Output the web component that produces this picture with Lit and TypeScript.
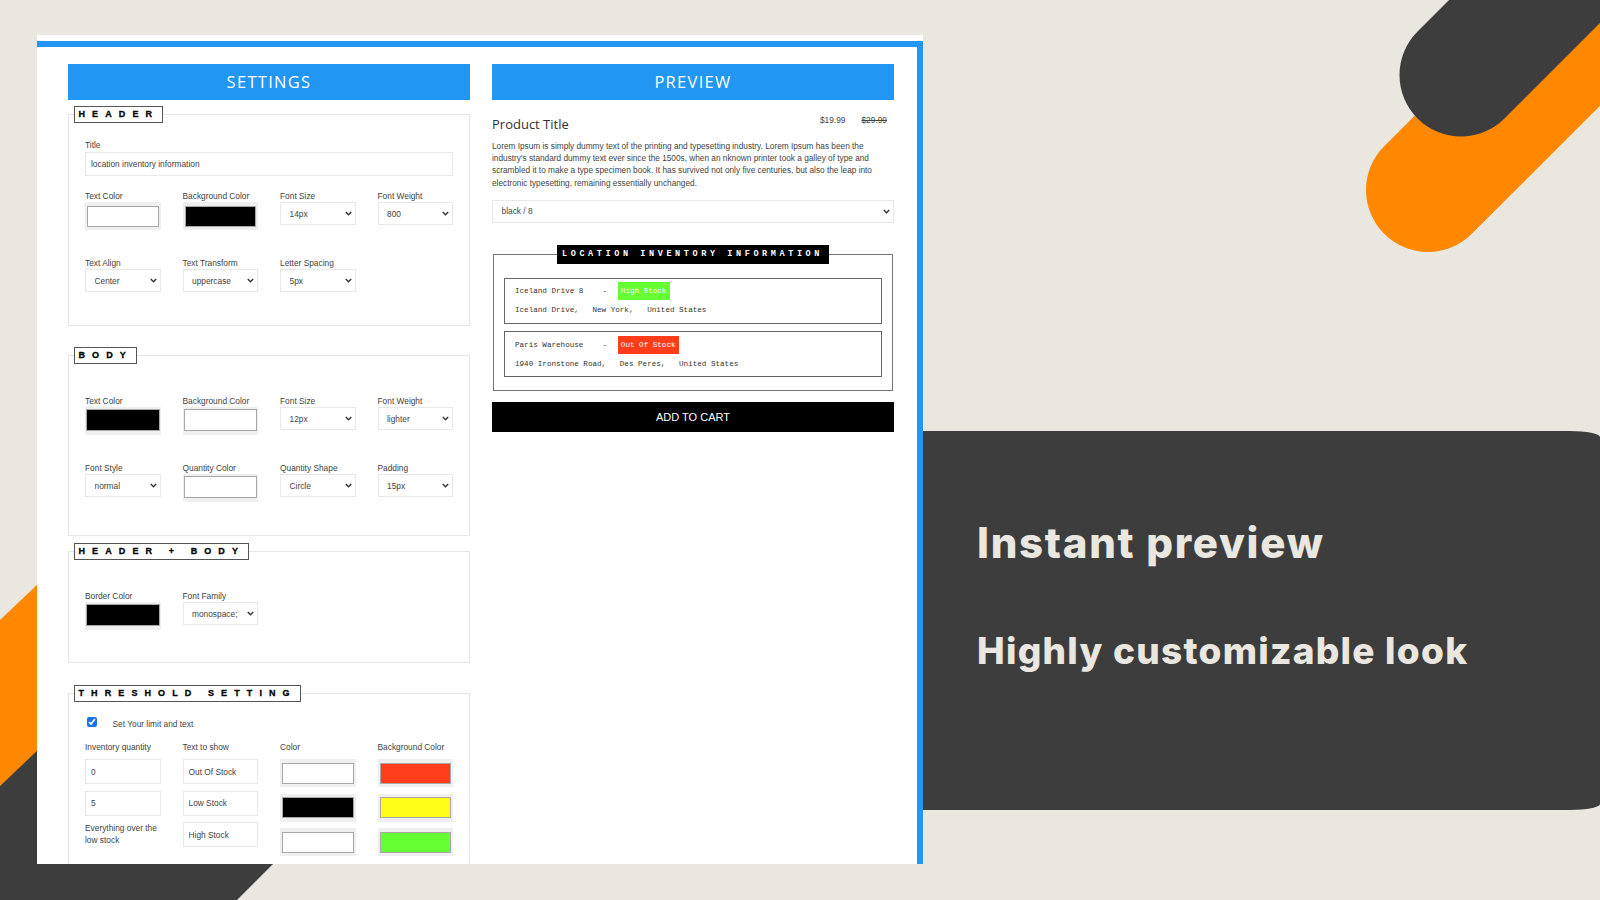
import { LitElement, html, css, svg } from "lit";
import { customElement } from "lit/decorators.js";

type Ctl =
  | { k: "color"; label: string; c: string; tight?: boolean }
  | { k: "select"; label: string; v: string };

const sel = (label: string, v: string): Ctl => ({ k: "select", label, v });
const col = (label: string, c: string, tight = false): Ctl => ({ k: "color", label, c, tight });

const headerRows: Ctl[] = [
  col("Text Color", "#fff"),
  col("Background Color", "#000"),
  sel("Font Size", "14px"),
  sel("Font Weight", "800"),
  sel("Text Align", "Center"),
  sel("Text Transform", "uppercase"),
  sel("Letter Spacing", "5px"),
];
const bodyRows: Ctl[] = [
  col("Text Color", "#000", true),
  col("Background Color", "#fff", true),
  sel("Font Size", "12px"),
  sel("Font Weight", "lighter"),
  sel("Font Style", "normal"),
  col("Quantity Color", "#fff", true),
  sel("Quantity Shape", "Circle"),
  sel("Padding", "15px"),
];
const bothRows: Ctl[] = [col("Border Color", "#000", true), sel("Font Family", "monospace;")];

@customElement("app-root")
export class AppRoot extends LitElement {
  static styles = css`
    :host {
      display: block;
      position: relative;
      width: 1600px;
      height: 900px;
      overflow: hidden;
      background: #e9e7e0;
      font-family: "Liberation Sans", Arial, sans-serif;
      color: #444;
    }
    .bg { position: absolute; inset: 0; width: 1600px; height: 900px; }
    .page {
      position: relative;
      display: flex;
      align-items: flex-start;
      padding: 35px 0 0 37px;
    }
    .window {
      width: 886px;
      height: 829px;
      box-sizing: border-box;
      background: #fff;
      padding-top: 6px;
      overflow: hidden;
      flex: none;
    }
    .frame {
      height: 823px;
      box-sizing: border-box;
      border-top: 6px solid #2196f3;
      border-right: 6px solid #2196f3;
      padding: 16px 23px 0 31px;
      display: grid;
      grid-template-columns: 402px 402px;
      column-gap: 22px;
      align-items: start;
    }
    .title {
      height: 36px;
      margin-top: 0.5px;
      background: #2196f3;
      color: #fff;
      display: flex;
      align-items: center;
      justify-content: center;
      font: 400 16.5px "Open Sans", sans-serif;
      letter-spacing: 1.3px;
    }
    fieldset {
      margin: 0;
      padding: 0 16px 0 16px;
      border: 1.5px solid #e6e6e6;
      box-sizing: border-box;
      min-inline-size: 0;
    }
    legend {
      margin-left: -11px;
      padding: 0 3px 0 3.5px;
      height: 17px;
      box-sizing: border-box;
      border: 1.5px solid #555;
      background: #fff;
      color: #000;
      font: 700 9px/14px "Liberation Sans", sans-serif;
      -webkit-text-stroke: 0.3px #000;
      letter-spacing: 7.1px;
      white-space: pre;
    }
    .f1 { height: 220px; margin-top: 6.5px; padding-top: 17px; }
    .f2 { height: 189px; margin-top: 21px; padding-top: 31px; }
    .f3 { height: 120px; margin-top: 7px; padding-top: 30px; }
    .f4 { height: 240px; margin-top: 22px; padding-top: 16px; }
    .lab {
      display: block;
      font-size: 8.35px;
      line-height: 11px;
      height: 11px;
      margin-bottom: 1px;
      white-space: nowrap;
    }
    .grid .lab { margin: 1px 0 0; }
    .text {
      display: block;
      box-sizing: border-box;
      width: 100%;
      height: 25px;
      border: 1px solid #e8e8e8;
      padding: 0 5px;
      background: #fff;
      color: #444;
      font: 8.35px "Liberation Sans", sans-serif;
      outline: none;
    }
    .title-input { height: 24px; }
    .grid {
      display: grid;
      grid-template-columns: repeat(4, 75.5px);
      column-gap: 22px;
      grid-auto-rows: 67px;
    }
    .mt { margin-top: 14px; }
    .control {
      appearance: none;
      -webkit-appearance: none;
      display: block;
      box-sizing: border-box;
      width: 100%;
      height: 23px;
      padding: 0 12px 0 8.5px;
      border: 1px solid #e8e8e8;
      border-radius: 0;
      color: #444;
      font: 8.35px "Liberation Sans", sans-serif;
      outline: none;
      background: #fff url("data:image/svg+xml,%3Csvg xmlns='http://www.w3.org/2000/svg' width='7' height='5' viewBox='0 0 7 5'%3E%3Cpath d='M.8 1l2.7 2.7L6.2 1' fill='none' stroke='%23333' stroke-width='1.4'/%3E%3C/svg%3E") no-repeat right 3px center;
    }
    .swatch {
      box-sizing: border-box;
      width: 100%;
      height: 28px;
      background: #efefef;
      padding: 3.5px 2px 3.5px;
    }
    .swatch.tight { padding: 1.5px 1px 4px; }
    .swatch i {
      display: block;
      height: 100%;
      box-sizing: border-box;
      border: 1px solid #a8a8a8;
    }
    .check {
      display: flex;
      align-items: center;
      height: 12px;
      margin-bottom: 12px;
      padding-left: 2px;
      font-size: 8.35px;
    }
    .check input {
      width: 10px;
      height: 10px;
      margin: 0 15.5px 4px 0;
      accent-color: #1a73e8;
    }
    .cols {
      display: grid;
      grid-template-columns: repeat(4, 75.5px);
      column-gap: 22px;
      align-items: start;
    }
    .cols .lab { margin-bottom: 6px; }
    .stack-i { display: flex; flex-direction: column; gap: 6.6px; }
    .stack-s { display: flex; flex-direction: column; gap: 6.6px; }
    .over { font-size: 8.35px; line-height: 12px; }
    /* preview */
    .head {
      display: flex;
      align-items: flex-start;
      justify-content: space-between;
      margin-top: 14.5px;
      height: 27px;
    }
    .ptitle { font: 400 13px/20px "Open Sans", sans-serif; color: #333; }
    .prices {
      display: flex;
      gap: 16px;
      padding: 0.5px 7px 0 0;
      font-size: 8.35px;
      line-height: 11px;
    }
    .desc {
      margin: 0;
      font-size: 8.28px;
      line-height: 12.2px;
      white-space: nowrap;
      color: #444;
    }
    .variant { margin-top: 10px; width: 402px; }
    .widget {
      position: relative;
      margin: 31px 1px 0;
      height: 137px;
      box-sizing: border-box;
      border: 1.5px solid #777;
      padding: 23px 10px 0;
      display: flex;
      flex-direction: column;
      gap: 7px;
      font-family: "Liberation Mono", "DejaVu Sans Mono", monospace;
    }
    .wtitle {
      position: absolute;
      top: -9.5px;
      left: 62.5px;
      width: 272px;
      height: 19px;
      background: #000;
      color: #fff;
      font: 700 8.5px/19px "Liberation Mono", monospace;
      letter-spacing: 3.6px;
      text-align: center;
      white-space: pre;
    }
    .loc {
      box-sizing: border-box;
      height: 46px;
      border: 1.5px solid #666;
      padding: 3px 9.5px 0 10px;
      font-size: 7.6px;
      color: #333;
    }
    .loc + .loc { padding-top: 4px; }
    .loc .l1 { display: flex; align-items: center; height: 18px; }
    .loc .l2 { line-height: 20px; white-space: pre; }
    .badge {
      color: #fff;
      height: 18px;
      line-height: 18px;
      padding: 0 3.3px;
      margin-left: 10.5px;
    }
    .name { width: 87.5px; }
    .cart {
      margin-top: 11.5px;
      height: 30px;
      background: #000;
      color: #fff;
      display: flex;
      align-items: center;
      justify-content: center;
      font-size: 11px;
    }
    .panel {
      flex: none;
      width: 677px;
      height: 379px;
      margin-top: 396px;
      box-sizing: border-box;
      background: #3d3d3d;
      border-radius: 0 30px 30px 0 / 0 6px 6px 0;
      padding: 87px 0 0 54px;
      color: #e9e7e0;
      font-family: Inter, sans-serif;
      font-weight: 800;
    }
    .h1 { font-size: 42px; line-height: 50px; letter-spacing: 1.7px; white-space: nowrap; }
    .h2 { font-size: 37px; line-height: 44px; margin-top: 61px; letter-spacing: 1.25px; white-space: nowrap; }
  `;

  private ctl(c: Ctl) {
    if (c.k === "select")
      return html`<div>
        <span class="lab">${c.label}</span>
        <select class="control"><option>${c.v}</option></select>
      </div>`;
    return html`<div>
      <span class="lab">${c.label}</span>
      ${this.swatch(c.c, c.tight)}
    </div>`;
  }

  private swatch(c: string, tight = false) {
    return html`<div class="swatch ${tight ? "tight" : ""}"><i style="background:${c}"></i></div>`;
  }

  render() {
    return html`
      <svg class="bg" viewBox="0 0 1600 900" aria-hidden="true">
        ${svg`
          <polygon points="0,620 40,582 40,750 0,786" fill="#ff8800"></polygon>
          <polygon points="0,786 40,748 40,860 277,860 237,900 0,900" fill="#3d3d3d"></polygon>
          <line x1="1428" y1="190" x2="1700" y2="-82" stroke="#ff8800" stroke-width="124" stroke-linecap="round"></line>
          <line x1="1461" y1="75" x2="1701" y2="-165" stroke="#3d3d3d" stroke-width="123" stroke-linecap="round"></line>
        `}
      </svg>
      <div class="page">
        <div class="window">
          <div class="frame">
            <section>
              <div class="title">SETTINGS</div>
              <fieldset class="f1">
                <legend>HEADER</legend>
                <span class="lab">Title</span>
                <input class="text title-input" .value=${"location inventory information"} />
                <div class="grid mt">${headerRows.map((c) => this.ctl(c))}</div>
              </fieldset>
              <fieldset class="f2">
                <legend>BODY</legend>
                <div class="grid">${bodyRows.map((c) => this.ctl(c))}</div>
              </fieldset>
              <fieldset class="f3">
                <legend>HEADER + BODY</legend>
                <div class="grid">${bothRows.map((c) => this.ctl(c))}</div>
              </fieldset>
              <fieldset class="f4">
                <legend>THRESHOLD SETTING</legend>
                <label class="check"><input type="checkbox" checked />Set Your limit and text</label>
                <div class="cols">
                  <div>
                    <span class="lab">Inventory quantity</span>
                    <div class="stack-i">
                      <input class="text" .value=${"0"} />
                      <input class="text" .value=${"5"} />
                      <div class="over">Everything over the<br />low stock</div>
                    </div>
                  </div>
                  <div>
                    <span class="lab">Text to show</span>
                    <div class="stack-i">
                      <input class="text" .value=${"Out Of Stock"} />
                      <input class="text" .value=${"Low Stock"} />
                      <input class="text" .value=${"High Stock"} />
                    </div>
                  </div>
                  <div>
                    <span class="lab">Color</span>
                    <div class="stack-s">${["#fff", "#000", "#fff"].map((c) => this.swatch(c))}</div>
                  </div>
                  <div>
                    <span class="lab">Background Color</span>
                    <div class="stack-s">${["#ff3d1a", "#ffff1a", "#66ff33"].map((c) => this.swatch(c))}</div>
                  </div>
                </div>
              </fieldset>
            </section>
            <section>
              <div class="title">PREVIEW</div>
              <div class="head">
                <div class="ptitle">Product Title</div>
                <div class="prices"><span>$19.99</span><s>$29.99</s></div>
              </div>
              <p class="desc">Lorem Ipsum is simply dummy text of the printing and typesetting industry. Lorem Ipsum has been the<br />industry's standard dummy text ever since the 1500s, when an nknown printer took a galley of type and<br />scrambled it to make a type specimen book. It has survived not only five centuries, but also the leap into<br />electronic typesetting, remaining essentially unchanged.</p>
              <select class="control variant"><option>black / 8</option></select>
              <div class="widget">
                <div class="wtitle">LOCATION INVENTORY INFORMATION</div>
                <div class="loc">
                  <div class="l1"><span class="name">Iceland Drive 8</span><span>-</span><span class="badge" style="background:#66ff33">High Stock</span></div>
                  <div class="l2">Iceland Drive,   New York,   United States</div>
                </div>
                <div class="loc">
                  <div class="l1"><span class="name">Paris Warehouse</span><span>-</span><span class="badge" style="background:#ff3d1a">Out Of Stock</span></div>
                  <div class="l2">1940 Ironstone Road,   Des Peres,   United States</div>
                </div>
              </div>
              <div class="cart">ADD TO CART</div>
            </section>
          </div>
        </div>
        <div class="panel">
          <div class="h1">Instant preview</div>
          <div class="h2">Highly customizable look</div>
        </div>
      </div>
    `;
  }
}
